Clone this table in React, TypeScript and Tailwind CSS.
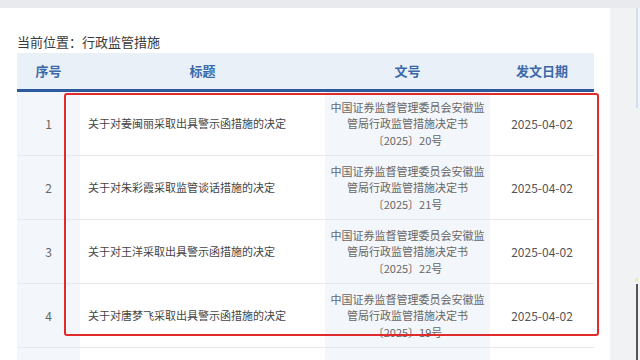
import React from 'react'

type Row = { no: number; title: string; docNo: string; date: string }

const rows: Row[] = [
  { no: 1, title: '关于对姜闽丽采取出具警示函措施的决定', docNo: '〔2025〕20号', date: '2025-04-02' },
  { no: 2, title: '关于对朱彩霞采取监管谈话措施的决定', docNo: '〔2025〕21号', date: '2025-04-02' },
  { no: 3, title: '关于对王洋采取出具警示函措施的决定', docNo: '〔2025〕22号', date: '2025-04-02' },
  { no: 4, title: '关于对唐梦飞采取出具警示函措施的决定', docNo: '〔2025〕19号', date: '2025-04-02' },
]

const font = "font-['Noto_Sans_CJK_SC','Noto_Sans',sans-serif]"

export default function App() {
  return (
    <div className={`relative h-[360px] w-[640px] overflow-hidden bg-[#f1f2f4] ${font}`}>
      <div className="h-[8px] bg-[#e8eaed]" />
      <div className="flex h-[352px]">
        <div className="w-[610px] bg-white pl-[17px] pt-[24px]">
          <div className="h-[20px] text-[13px] leading-[20px] text-[#3a3a3a]">当前位置：行政监管措施</div>

          <div className="mt-[1px] w-[577px]">
            <div className="grid h-[39px] grid-cols-[63px_245px_165px_104px] items-center border-b-[3px] border-[#2d5a9c] bg-[#eaf0f7] text-[13px] font-bold text-[#3a68a8]">
              <div className="text-center">序号</div>
              <div className="text-center">标题</div>
              <div className="text-center">文号</div>
              <div className="text-center">发文日期</div>
            </div>

            {rows.map((r) => (
              <div
                key={r.no}
                className="grid h-[64px] grid-cols-[63px_245px_165px_104px] border-b border-[#e5e8ed] text-[11px]"
              >
                <div className="flex items-center justify-center bg-[#f3f6fa] text-[12px] text-[#666]">{r.no}</div>
                <div className="flex items-center pl-[8px] text-[#444]">{r.title}</div>
                <div className="flex flex-col items-center justify-center bg-[#f3f6fa] text-center leading-[16.5px] text-[#666]">
                  <span>中国证券监督管理委员会安徽监</span>
                  <span>管局行政监管措施决定书</span>
                  <span>{r.docNo}</span>
                </div>
                <div className="flex items-center justify-center text-[12px] text-[#555]">{r.date}</div>
              </div>
            ))}

            <div className="grid h-[20px] grid-cols-[63px_245px_165px_104px]">
              <div className="bg-[#f3f6fa]" />
              <div />
              <div className="bg-[#f3f6fa]" />
              <div />
            </div>
          </div>
        </div>

        <div className="relative flex-1">
          <div className="absolute left-[26px] top-0 h-[100px] w-[2px] bg-[#cfe0f2]" />
          <div className="absolute left-[25px] top-[270px] h-[4px] w-[3px] bg-[#f3e9a8]" />
          <div className="absolute left-[26px] top-[276px] h-[80px] w-[2px] bg-[#555]" />
        </div>
      </div>

      {/* red annotation box */}
      <div className="absolute left-[64px] top-[93px] h-[243px] w-[535px] rounded-[3px] border-2 border-[#e12a2a]" />
    </div>
  )
}
